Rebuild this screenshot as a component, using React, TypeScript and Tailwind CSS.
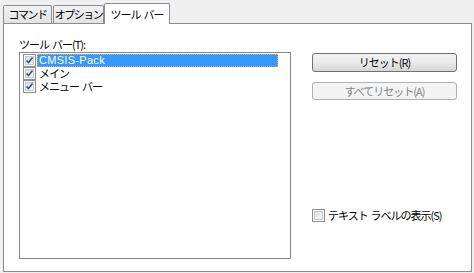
import React from "react";

const font = { fontFamily: '"Noto Sans CJK JP", "Liberation Sans", sans-serif' };

function Check({ checked }: { checked: boolean }) {
  return (
    <span className="w-[13px] h-[13px] border border-[#8e8f8f] bg-white p-px shrink-0 flex">
      <span className="flex-1 border border-[#c8c9cb] bg-gradient-to-br from-[#dcdcdc] to-[#fafafa] relative">
        {checked && (
          <svg viewBox="0 0 9 9" className="absolute -left-px -top-px w-[9px] h-[9px]">
            <path d="M1.5 4.5 L3.5 6.5 L7.5 1.5" fill="none" stroke="#3c4c8c" strokeWidth="1.6" />
          </svg>
        )}
      </span>
    </span>
  );
}

const items = [
  { label: "CMSIS-Pack", selected: true },
  { label: "メイン", selected: false },
  { label: "メニュー\u00a0\u00a0バー", selected: false },
];

export default function App() {
  return (
    <div className="w-[474px] h-[273px] bg-[#f0f0f0] text-[11px] text-black pt-[3px] pl-[3px] whitespace-nowrap" style={font}>
      <div className="flex items-end h-[20px]">
        <div className="w-[49px] h-[18px] border border-[#898c95] border-b-0 bg-gradient-to-b from-[#f2f2f2] to-[#e3e3e3] leading-[17px] tracking-[-1.5px] text-center rounded-t-[2px]">
          コマンド
        </div>
        <div className="w-[51px] h-[18px] ml-px border border-[#898c95] border-b-0 bg-gradient-to-b from-[#f2f2f2] to-[#e3e3e3] leading-[17px] tracking-[-1.5px] text-center rounded-t-[2px]">
          オプション
        </div>
        <div className="w-[66px] h-[21px] -mb-px relative z-10 border border-[#898c95] border-b-0 bg-white leading-[20px] tracking-[-1px] text-center rounded-t-[2px]">
          ツール&nbsp;&nbsp;バー
        </div>
      </div>
      <div className="w-[469px] h-[249px] border border-[#898c95] bg-white flex pl-[15px] pt-[13px]">
        <div className="flex flex-col">
          <div className="h-[15px] leading-[14px] tracking-[-1px]">ツール&nbsp;&nbsp;バー(T):</div>
          <div className="w-[272px] h-[207px] border border-[#828790] p-px flex flex-col">
            {items.map((it) => (
              <div key={it.label} className="h-[13px] flex items-center">
                <span className="ml-[2px] mr-px">
                  <Check checked />
                </span>
                <span
                  className={
                    it.selected
                      ? "h-[13px] w-[241px] bg-[#3399ff] text-white border border-dotted border-[#f4a060] leading-[11px] pl-px tracking-[0.3px]"
                      : "h-[13px] leading-[13px] pl-[2px] tracking-[-1px]"
                  }
                  style={it.selected ? { fontFamily: '"Liberation Sans", sans-serif' } : undefined}
                >
                  {it.label}
                </span>
              </div>
            ))}
          </div>
        </div>
        <div className="ml-[21px] flex flex-col">
          <button className="mt-[16px] w-[145px] h-[19px] border border-[#707070] rounded-[3px] bg-gradient-to-b from-[#f2f2f2] via-[#ebebeb] to-[#d6d6d6] leading-[17px] tracking-[-1px]">
            リセット(R)
          </button>
          <button className="mt-[10px] w-[145px] h-[18px] border border-[#adb2b5] rounded-[3px] bg-[#f4f4f4] text-[#838383] leading-[16px] tracking-[-1px]">
            すべてリセット(A)
          </button>
          <div className="mt-[109px] flex items-center h-[13px]">
            <Check checked={false} />
            <span className="ml-[3px] tracking-[-1px] leading-[13px]">テキスト&nbsp;&nbsp;ラベルの表示(S)</span>
          </div>
        </div>
      </div>
    </div>
  );
}
